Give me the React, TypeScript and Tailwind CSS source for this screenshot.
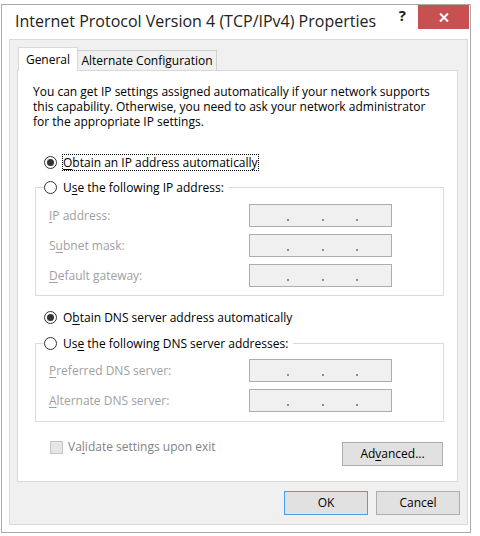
import type { ReactNode } from "react";

function Mn({ children }: { children: ReactNode }) {
	return <span className="underline underline-offset-[2px]">{children}</span>;
}

function Radio({
	checked = false,
	focused = false,
	children,
}: {
	checked?: boolean;
	focused?: boolean;
	children: ReactNode;
}) {
	return (
		<div className="flex h-[17px] items-center whitespace-nowrap">
			<span className="flex h-[13px] w-[13px] items-center justify-center rounded-full border border-[#333333] bg-white">
				{checked && <span className="h-[7px] w-[7px] rounded-full bg-[#333333]" />}
			</span>
			<span
				className={
					focused
						? "ml-[5px] border border-dotted border-black leading-[15px]"
						: "ml-[5px] border border-transparent leading-[15px]"
				}
			>
				{children}
			</span>
		</div>
	);
}

function IpBox() {
	return (
		<div className="flex h-[23px] w-[143px] items-start border border-[#adadad] bg-[#f0f0f0] pl-[37px] pt-[14px]">
			<span className="h-[2px] w-[2px] bg-[#8b8b9b]" />
			<span className="ml-[33px] h-[2px] w-[2px] bg-[#8b8b9b]" />
			<span className="ml-[32px] h-[2px] w-[2px] bg-[#8b8b9b]" />
		</div>
	);
}

function FieldRow({ children }: { children: ReactNode }) {
	return (
		<div className="flex h-[23px] items-center">
			<span className="w-[200px] whitespace-nowrap text-[#a0a0a0]">{children}</span>
			<IpBox />
		</div>
	);
}

export default function App() {
	return (
		<div className="h-[536px] w-[480px] bg-white pl-[1px] pt-[4px] font-['Open_Sans',sans-serif] text-[12px] text-black">
			<div className="flex h-[529px] w-[470px] flex-col border border-[#aaaaaa] bg-white">
				{/* title bar */}
				<div className="flex h-[34px] shrink-0 items-start justify-between">
					<div className="whitespace-nowrap pl-[13px] pt-[6px] text-[16px] leading-[20px] text-[#222222]">
						Internet Protocol Version 4 (TCP/IPv4) Properties
					</div>
					<div className="flex items-start">
						<span className="text-[15px] font-bold leading-[20px] text-[#222222]">?</span>
						<button
							type="button"
							className="ml-[12px] mr-[1px] flex h-[24px] w-[51px] items-center justify-center bg-[#c75050]"
						>
							<svg width="10" height="9" viewBox="0 0 10 9">
								<path d="M1 0.5 L9 8.5 M9 0.5 L1 8.5" stroke="white" strokeWidth="2" />
							</svg>
						</button>
					</div>
				</div>

				<div className="mb-[7px] ml-[7px] mr-[2px] flex flex-1 flex-col border border-[#d9d9d9] bg-[#f0f0f0] px-[7px] pt-[7px]">
					{/* tabs */}
					<div className="flex h-[23px] items-end pl-[1px]">
						<div className="relative z-10 -mb-px flex h-[24px] w-[60px] items-center justify-center border border-b-0 border-[#d9d9d9] bg-white">
							General
						</div>
						<div className="flex h-[20px] w-[139px] items-center justify-center whitespace-nowrap border border-b-0 border-l-0 border-[#cfcfcf] bg-[#f0f0f0]">
							Alternate Configuration
						</div>
					</div>

					{/* tab panel */}
					<div className="flex h-[412px] w-[441px] flex-col border border-[#d9d9d9] bg-white">
						<div className="whitespace-nowrap pl-[15px] pt-[13px] leading-[15px]">
							You can get IP settings assigned automatically if your network supports
							<br />
							this capability. Otherwise, you need to ask your network administrator
							<br />
							for the appropriate IP settings.
						</div>

						<div className="ml-[26px] mt-[25px]">
							<Radio checked focused>
								<Mn>O</Mn>btain an IP address automatically
							</Radio>
						</div>

						<fieldset className="ml-[17px] mt-[8px] w-[409px] border border-[#dcdcdc]">
							<legend className="ml-[8px] pr-[4px]">
								<Radio>
									U<Mn>s</Mn>e the following IP address:
								</Radio>
							</legend>
							<div className="flex flex-col gap-[7px] pb-[8px] pl-[13px] pt-[8px]">
								<FieldRow>
									<Mn>I</Mn>P address:
								</FieldRow>
								<FieldRow>
									S<Mn>u</Mn>bnet mask:
								</FieldRow>
								<FieldRow>
									<Mn>D</Mn>efault gateway:
								</FieldRow>
							</div>
						</fieldset>

						<div className="ml-[26px] mt-[13px]">
							<Radio checked>
								O<Mn>b</Mn>tain DNS server address automatically
							</Radio>
						</div>

						<fieldset className="ml-[17px] mt-[9px] w-[409px] border border-[#dcdcdc]">
							<legend className="ml-[8px] pr-[4px]">
								<Radio>
									Us<Mn>e</Mn> the following DNS server addresses:
								</Radio>
							</legend>
							<div className="flex flex-col gap-[7px] pb-[9px] pl-[13px] pt-[7px]">
								<FieldRow>
									<Mn>P</Mn>referred DNS server:
								</FieldRow>
								<FieldRow>
									<Mn>A</Mn>lternate DNS server:
								</FieldRow>
							</div>
						</fieldset>

						<div className="mt-[18px] flex items-start justify-between pl-[32px] pr-[14px]">
							<div className="flex h-[14px] items-center whitespace-nowrap">
								<span className="h-[13px] w-[13px] border border-[#c4c4c4] bg-[#e6e6e6]" />
								<span className="ml-[5px] text-[#838383]">
									Va<Mn>l</Mn>idate settings upon exit
								</span>
							</div>
							<button
								type="button"
								className="mt-[2px] h-[24px] w-[101px] border border-[#adadad] bg-[#e1e1e1]"
							>
								Ad<Mn>v</Mn>anced...
							</button>
						</div>
					</div>

					{/* dialog buttons */}
					<div className="mt-[9px] flex justify-end gap-[8px]">
						<button type="button" className="h-[24px] w-[84px] border border-[#4a9fec] bg-[#e1e1e1]">
							OK
						</button>
						<button type="button" className="h-[24px] w-[84px] border border-[#adadad] bg-[#e1e1e1]">
							Cancel
						</button>
					</div>
				</div>
			</div>
		</div>
	);
}
